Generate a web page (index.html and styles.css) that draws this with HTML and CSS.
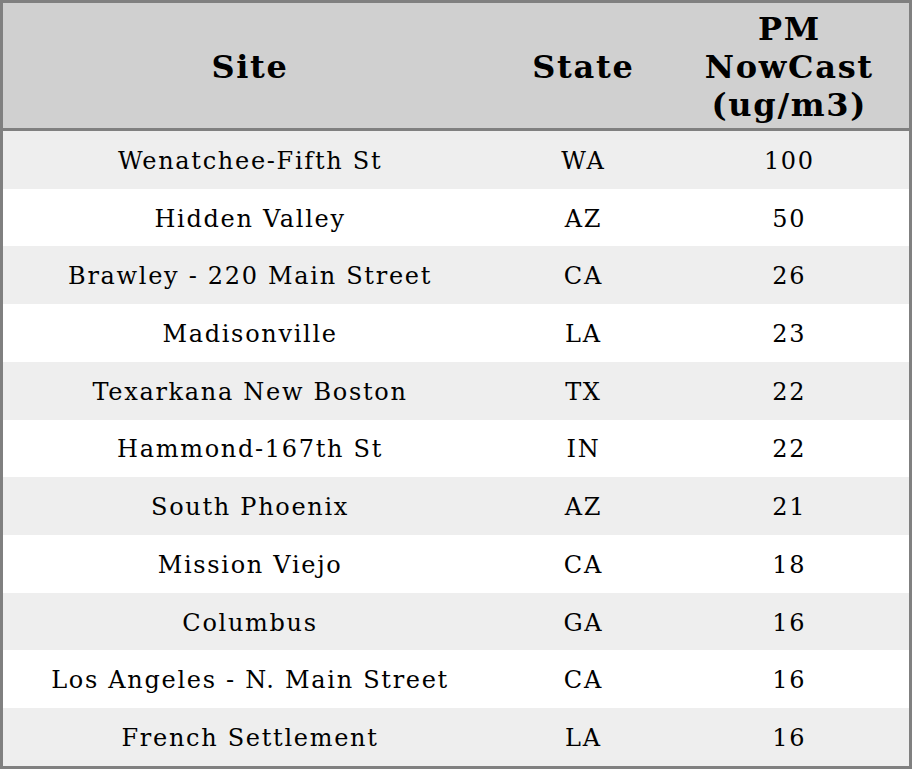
FILE: index.html
```html
<!DOCTYPE html>
<html>
<head>
<meta charset="utf-8">
<link rel="stylesheet" href="styles.css">
</head>
<body>
<table class="aq-table">
  <colgroup>
    <col class="col-site">
    <col class="col-state">
    <col class="col-pm">
  </colgroup>
  <thead>
    <tr class="head-row">
      <th>Site</th>
      <th>State</th>
      <th>PM<br>NowCast<br>(ug/m3)</th>
    </tr>
  </thead>
  <tbody>
    <tr><td>Wenatchee-Fifth St</td><td>WA</td><td>100</td></tr>
    <tr><td>Hidden Valley</td><td>AZ</td><td>50</td></tr>
    <tr><td>Brawley - 220 Main Street</td><td>CA</td><td>26</td></tr>
    <tr><td>Madisonville</td><td>LA</td><td>23</td></tr>
    <tr><td>Texarkana New Boston</td><td>TX</td><td>22</td></tr>
    <tr><td>Hammond-167th St</td><td>IN</td><td>22</td></tr>
    <tr><td>South Phoenix</td><td>AZ</td><td>21</td></tr>
    <tr><td>Mission Viejo</td><td>CA</td><td>18</td></tr>
    <tr><td>Columbus</td><td>GA</td><td>16</td></tr>
    <tr><td>Los Angeles - N. Main Street</td><td>CA</td><td>16</td></tr>
    <tr><td>French Settlement</td><td>LA</td><td>16</td></tr>
  </tbody>
</table>
</body>
</html>
```

FILE: styles.css
```css
html, body {
  margin: 0;
  padding: 0;
  background: #ffffff;
}

.aq-table {
  width: 912px;
  height: 769px;
  border-collapse: collapse;
  border: 3px solid #808080;
  font-family: "DejaVu Serif", serif;
  color: #000000;
  table-layout: fixed;
}

.col-site { width: 494px; }
.col-state { width: 172px; }
.col-pm { width: 240px; }

.head-row th {
  background: #d0d0d0;
  font-size: 32px;
  font-weight: bold;
  letter-spacing: 1.7px;
  line-height: 38px;
  height: 123px;
  padding: 2px 0 0 0;
  text-align: center;
  vertical-align: middle;
  border-bottom: 3px solid #808080;
}

.aq-table td {
  font-size: 24px;
  letter-spacing: 1.7px;
  line-height: 28px;
  height: 55.7px;
  padding: 2px 0 0 0;
  text-align: center;
  vertical-align: middle;
}

.aq-table tbody tr:nth-child(odd) td {
  background: #eeeeee;
}

.aq-table tbody tr:nth-child(even) td {
  background: #ffffff;
}
```
